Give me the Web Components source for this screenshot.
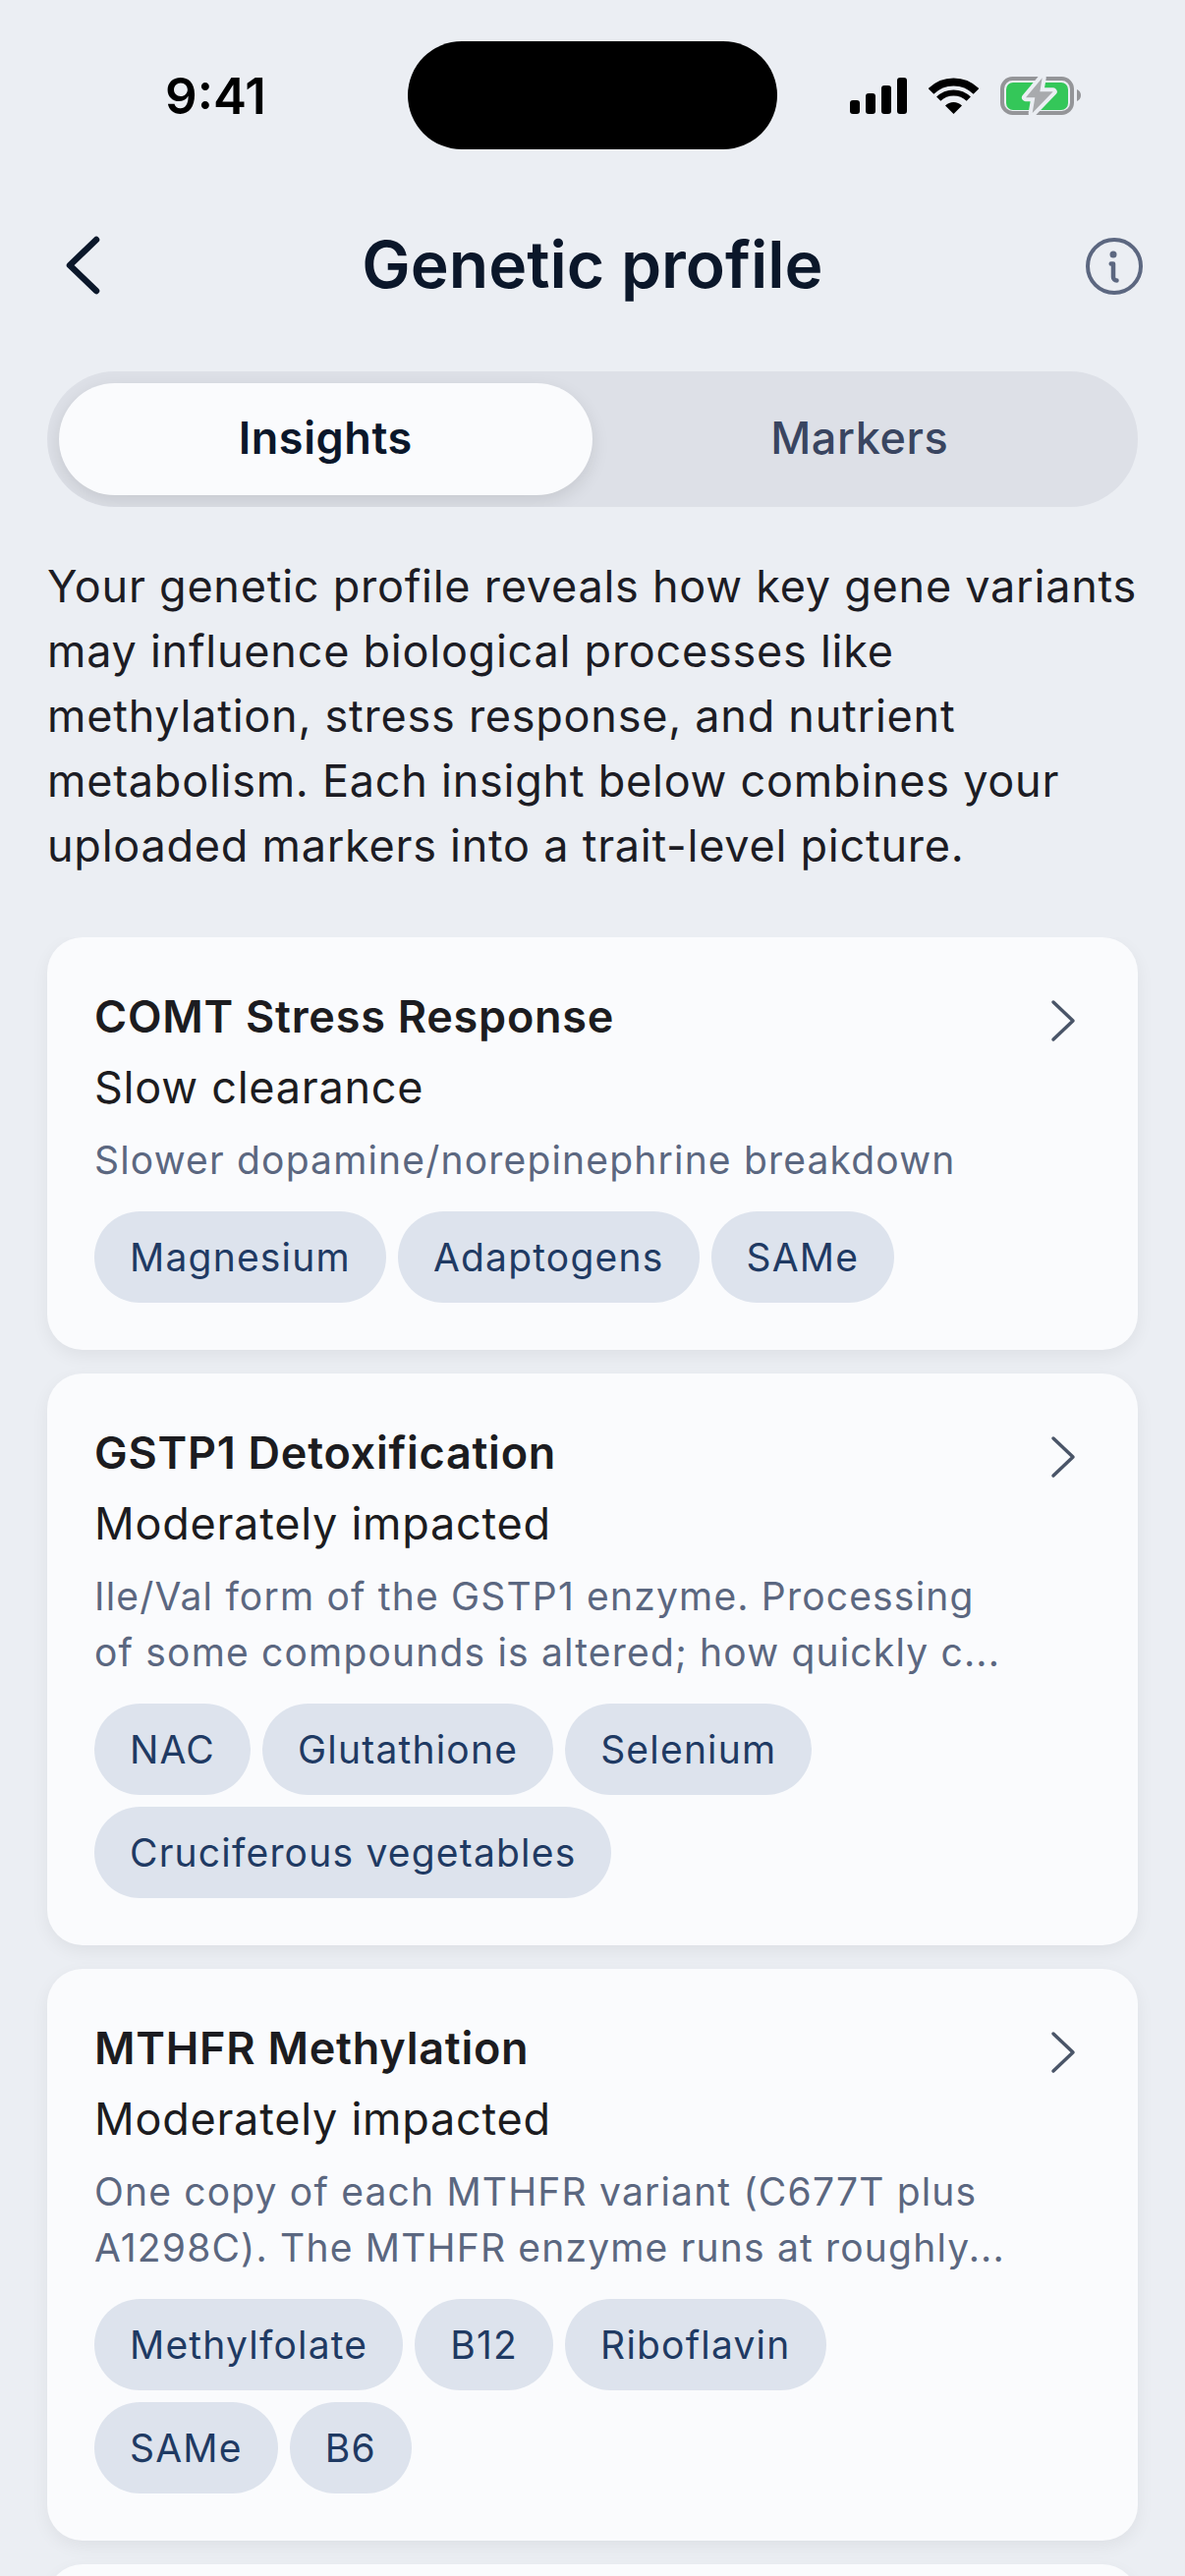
<!DOCTYPE html>
<html lang="en">
<head>
<meta charset="utf-8">
<title>Genetic profile</title>
<style>
    html, body {
        margin: 0;
        padding: 0;
        height: 2622px;
        overflow: hidden;
        background: #ebeef3;
        font-family: Inter, "Liberation Sans", sans-serif;
        font-weight: 370;
    }
    body {
        display: flex;
        flex-direction: column;
    }
    .card-list {
        flex: 1;
        min-height: 0;
        overflow: hidden;
        display: flex;
        flex-direction: column;
        gap: 24px;
        padding: 0 48px;
    }
</style>
</head>
<body>
<status-bar></status-bar>
<nav-header>Genetic profile</nav-header>
<segment-control first="Insights" second="Markers"></segment-control>
<intro-text>Your genetic profile reveals how key gene variants may influence biological processes like methylation, stress response, and nutrient metabolism. Each insight below combines your uploaded markers into a trait-level picture.</intro-text>
<div class="card-list">
    <insight-card title="COMT Stress Response" status="Slow clearance" desc="Slower dopamine/norepinephrine breakdown">
        <tag-chip>Magnesium</tag-chip>
        <tag-chip>Adaptogens</tag-chip>
        <tag-chip>SAMe</tag-chip>
    </insight-card>
    <insight-card title="GSTP1 Detoxification" status="Moderately impacted" desc="Ile/Val form of the GSTP1 enzyme. Processing of some compounds is altered; how quickly c...">
        <tag-chip>NAC</tag-chip>
        <tag-chip>Glutathione</tag-chip>
        <tag-chip>Selenium</tag-chip>
        <tag-chip>Cruciferous vegetables</tag-chip>
    </insight-card>
    <insight-card title="MTHFR Methylation" status="Moderately impacted" desc="One copy of each MTHFR variant (C677T plus A1298C). The MTHFR enzyme runs at roughly...">
        <tag-chip>Methylfolate</tag-chip>
        <tag-chip>B12</tag-chip>
        <tag-chip>Riboflavin</tag-chip>
        <tag-chip>SAMe</tag-chip>
        <tag-chip>B6</tag-chip>
    </insight-card>
    <insight-card></insight-card>
</div>

<script>
const statusTemplate = document.createElement("template");
statusTemplate.innerHTML = /* html */ `
    <style>
        :host {
            display: grid;
            grid-template-columns: 415px 376px 1fr;
            flex: none;
            height: 178px;
            padding-top: 42px;
            box-sizing: border-box;
            color: #000;
        }
        .time {
            height: 110px;
            display: flex;
            align-items: center;
            justify-content: center;
            padding-left: 24px;
            box-sizing: border-box;
            font-size: 51px;
            font-weight: 600;
        }
        .island {
            height: 110px;
            border-radius: 55px;
            background: #000;
        }
        .icons {
            height: 110px;
            display: flex;
            align-items: center;
            gap: 22px;
            padding-left: 74px;
        }
        svg { display: block; flex: none; }
    </style>
    <div class="time">9:41</div>
    <div class="island"></div>
    <div class="icons">
        <svg width="58" height="37" viewBox="0 0 58 37" fill="#000">
            <rect x="0" y="23" width="10" height="14" rx="3"/>
            <rect x="16" y="16" width="10" height="21" rx="3"/>
            <rect x="32" y="8" width="10" height="29" rx="3"/>
            <rect x="48" y="0" width="10" height="37" rx="3"/>
        </svg>
        <svg width="51" height="37" viewBox="0 0 51 37">
            <path d="M2.500 14a32.500 32.500 0 0 1 46 0" fill="none" stroke="#000" stroke-width="8"/>
            <path d="M10.200 21.700a21.700 21.700 0 0 1 30.600 0" fill="none" stroke="#000" stroke-width="6"/>
            <path d="M25.500 37L17 28.500a12 12 0 0 1 17 0z" fill="#000"/>
        </svg>
        <svg width="82" height="40" viewBox="0 -1 82 40">
            <rect x="2" y="2" width="71" height="35" rx="10.500" fill="none" stroke="#949598" stroke-width="4"/>
            <path d="M78 13c2.500 1 4 3 4 6s-1.500 5-4 6z" fill="#949598"/>
            <rect x="6" y="6" width="63" height="28" rx="7" fill="#34c759"/>
            <path d="M42.700 1.300 26 21.300h9.300L32.700 37 53.700 15.300H40.300z" fill="#a8aaad" stroke="#ebeef3" stroke-width="8" stroke-linejoin="round" paint-order="stroke"/>
        </svg>
    </div>
`;

class StatusBar extends HTMLElement {
    constructor() {
        super();
        this.attachShadow({ mode: "open" }).appendChild(statusTemplate.content.cloneNode(true));
    }
}
customElements.define("status-bar", StatusBar);

const headerTemplate = document.createElement("template");
headerTemplate.innerHTML = /* html */ `
    <style>
        :host {
            display: grid;
            grid-template-columns: 1fr auto 1fr;
            align-items: center;
            flex: none;
            height: 184px;
            padding: 0 41px;
            box-sizing: border-box;
        }
        .title {
            padding-bottom: 3px;
            font-size: 66px;
            font-weight: 600;
            line-height: 80px;
            color: #0b172a;
        }
        .back { margin-left: 22px; }
        .right { justify-self: end; }
        svg { display: block; }
    </style>
    <svg class="back" width="44" height="64" viewBox="0 0 44 64" fill="none" stroke="#0b172a" stroke-width="6.500" stroke-linecap="round" stroke-linejoin="round">
        <path d="M35 6 8 32l27 26"/>
    </svg>
    <div class="title"><slot></slot></div>
    <svg class="right" width="60" height="60" viewBox="0 0 60 60" fill="none" stroke="#5c6780" stroke-linecap="round">
        <circle cx="29" cy="31" r="27" stroke-width="4"/>
        <circle cx="28" cy="19" r="3.500" fill="#5c6780" stroke="none"/>
        <path d="M25.700 28.500H28V42c0 2 1.500 3.500 3.500 3.500" stroke-width="4.500" stroke-linejoin="round"/>
    </svg>
`;

class NavHeader extends HTMLElement {
    constructor() {
        super();
        this.attachShadow({ mode: "open" }).appendChild(headerTemplate.content.cloneNode(true));
    }
}
customElements.define("nav-header", NavHeader);

const segmentTemplate = document.createElement("template");
segmentTemplate.innerHTML = /* html */ `
    <style>
        :host {
            display: block;
            flex: none;
            margin: 16px 48px 0;
        }
        .track {
            display: grid;
            grid-template-columns: 1fr 1fr;
            gap: 1px;
            padding: 12px;
            border-radius: 69px;
            background: #dde0e7;
            overflow: hidden;
        }
        .tab {
            height: 114px;
            box-sizing: border-box;
            padding-bottom: 3px;
            display: flex;
            align-items: center;
            justify-content: center;
            border-radius: 57px;
            font-size: 45px;
            letter-spacing: 0.6px;
            font-weight: 450;
            color: #394560;
        }
        .tab.active {
            background: #fafbfd;
            color: #0b172a;
            font-weight: 560;
            box-shadow: 0 6px 18px rgba(0, 0, 0, 0.1);
        }
    </style>
    <div class="track">
        <div class="tab active" id="first"></div>
        <div class="tab" id="second"></div>
    </div>
`;

class SegmentControl extends HTMLElement {
    constructor() {
        super();
        const shadow = this.attachShadow({ mode: "open" });
        shadow.appendChild(segmentTemplate.content.cloneNode(true));
        shadow.getElementById("first").textContent = this.getAttribute("first");
        shadow.getElementById("second").textContent = this.getAttribute("second");
    }
}
customElements.define("segment-control", SegmentControl);

const introTemplate = document.createElement("template");
introTemplate.innerHTML = /* html */ `
    <style>
        :host {
            display: block;
            flex: none;
            padding: 48px 48px 60px;
            font-size: 45px;
            line-height: 66px;
            letter-spacing: 0.75px;
            color: #1c1c24;
        }
    </style>
    <slot></slot>
`;

class IntroText extends HTMLElement {
    constructor() {
        super();
        this.attachShadow({ mode: "open" }).appendChild(introTemplate.content.cloneNode(true));
    }
}
customElements.define("intro-text", IntroText);

const cardTemplate = document.createElement("template");
cardTemplate.innerHTML = /* html */ `
    <style>
        :host {
            display: block;
            flex: none;
            padding: 48px;
            border-radius: 36px;
            background: #fafbfd;
            box-shadow: 0 6px 18px rgba(0, 0, 0, 0.06);
        }
        .top {
            display: grid;
            grid-template-columns: 1fr 30px;
            gap: 38px;
            padding-right: 12px;
        }
        .title {
            font-size: 45px;
            font-weight: 560;
            line-height: 66px;
            letter-spacing: 0.75px;
            color: #1c1c20;
        }
        .status {
            margin-top: 6px;
            font-size: 45px;
            line-height: 66px;
            letter-spacing: 0.75px;
            color: #1c1c20;
        }
        .desc {
            margin-top: 12px;
            font-size: 39px;
            line-height: 57px;
            letter-spacing: 1.18px;
            color: #5b6780;
        }
        .tags {
            display: flex;
            flex-wrap: wrap;
            gap: 12px;
            margin-top: 24px;
        }
        svg { display: block; margin-top: 14px; }
    </style>
    <div class="top">
        <div>
            <div class="title" id="title"></div>
            <div class="status" id="status"></div>
            <div class="desc" id="desc"></div>
            <div class="tags"><slot></slot></div>
        </div>
        <svg width="30" height="46" viewBox="0 0 30 46" fill="none" stroke="#4a5568" stroke-width="3.500" stroke-linecap="round" stroke-linejoin="round">
            <path d="M4 4l20 19L4 42"/>
        </svg>
    </div>
`;

class InsightCard extends HTMLElement {
    constructor() {
        super();
        const shadow = this.attachShadow({ mode: "open" });
        shadow.appendChild(cardTemplate.content.cloneNode(true));
        shadow.getElementById("title").textContent = this.getAttribute("title");
        shadow.getElementById("status").textContent = this.getAttribute("status");
        shadow.getElementById("desc").textContent = this.getAttribute("desc");
    }
}
customElements.define("insight-card", InsightCard);

const chipTemplate = document.createElement("template");
chipTemplate.innerHTML = /* html */ `
    <style>
        :host {
            display: flex;
            align-items: center;
            height: 93px;
            padding: 0 36px;
            border-radius: 47px;
            background: #dde3ed;
            font-size: 39px;
            letter-spacing: 1.2px;
            color: #1f3a63;
        }
    </style>
    <slot></slot>
`;

class TagChip extends HTMLElement {
    constructor() {
        super();
        this.attachShadow({ mode: "open" }).appendChild(chipTemplate.content.cloneNode(true));
    }
}
customElements.define("tag-chip", TagChip);
</script>
</body>
</html>
